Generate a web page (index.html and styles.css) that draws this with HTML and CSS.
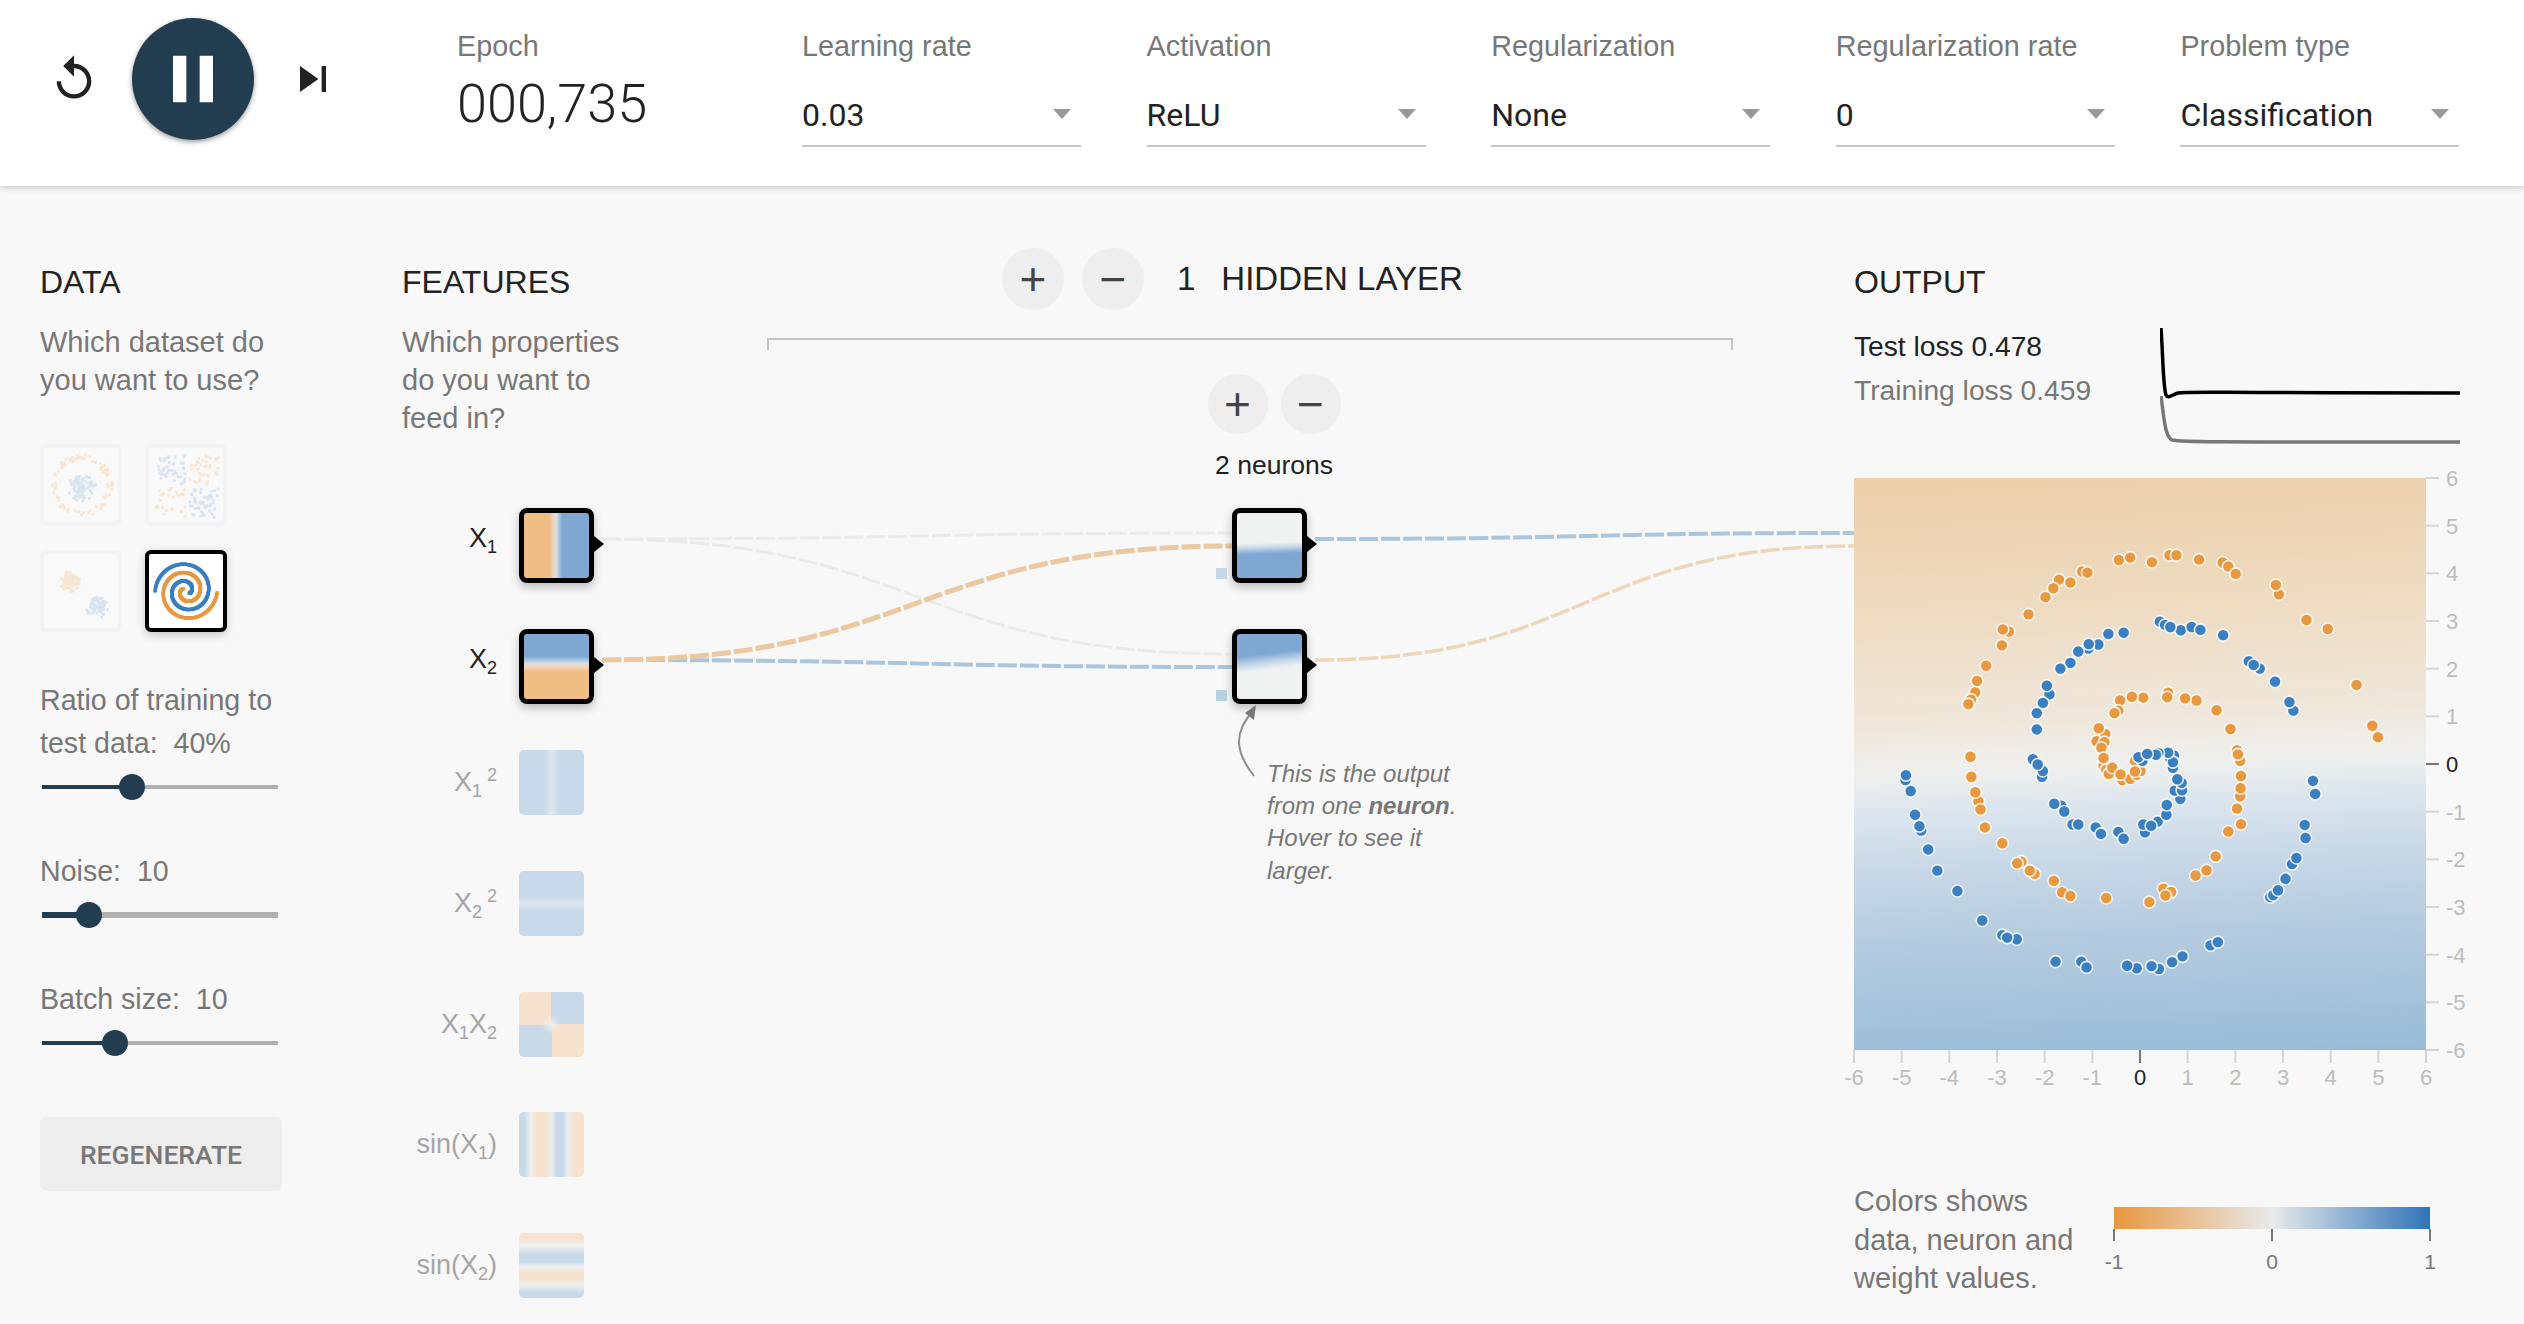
FILE: index.html
```html
<!DOCTYPE html>
<html lang="en">
<head>
    <meta charset="UTF-8">
    <title>Neural network playground</title>
    <link rel="stylesheet" href="styles.css">
</head>
<body>
    <header class="topbar">
        <div class="player">
            <button class="icon-btn reset-btn">
                <svg width="52" height="52" viewBox="0 0 24 24"><path d="M12 5V1L7 6l5 5V7c3.31 0 6 2.69 6 6s-2.69 6-6 6-6-2.69-6-6H4c0 4.42 3.58 8 8 8s8-3.58 8-8-3.58-8-8-8z"/></svg>
            </button>
            <button class="play-btn">
                <svg width="80" height="80" viewBox="0 0 24 24"><path d="M6 19h4V5H6v14zm8-14v14h4V5h-4z"/></svg>
            </button>
            <button class="icon-btn step-btn">
                <svg width="52" height="52" viewBox="0 0 24 24"><path d="M6 18l8.5-6L6 6v12zM16 6v12h2V6h-2z"/></svg>
            </button>
        </div>
        <div class="epoch">
            <div class="top-label">Epoch</div>
            <div class="epoch-value">000,735</div>
        </div>
        <div class="dropdowns">
            <div class="dropdown">
                <label class="top-label">Learning rate</label>
                <div class="select-wrap"><select><option>0.03</option></select></div>
            </div>
            <div class="dropdown">
                <label class="top-label">Activation</label>
                <div class="select-wrap"><select><option>ReLU</option></select></div>
            </div>
            <div class="dropdown">
                <label class="top-label">Regularization</label>
                <div class="select-wrap"><select><option>None</option></select></div>
            </div>
            <div class="dropdown">
                <label class="top-label">Regularization rate</label>
                <div class="select-wrap"><select><option>0</option></select></div>
            </div>
            <div class="dropdown">
                <label class="top-label">Problem type</label>
                <div class="select-wrap"><select><option>Classification</option></select></div>
            </div>
        </div>
    </header>

    <main class="board">
        <svg class="links" viewBox="0 186 2524 1138">
            <path class="link link-faint" d="M602 539 C917 539 917 533 1232 533"/>
            <path class="link link-faint" d="M602 539 C917 539 917 654 1232 654"/>
            <path class="link link-blue" d="M602 660 C917 660 917 667 1232 667"/>
            <path class="link link-orange" d="M602 660 C917 660 917 546 1232 546"/>
            <path class="link link-blue" d="M1315 539 C1585 539 1585 533 1854 533"/>
            <path class="link link-orange-thin" d="M1315 660 C1585 660 1585 546 1854 546"/>
        </svg>

        <section class="col-data">
            <h4 class="heading">DATA</h4>
            <p class="hint">Which dataset do<br>you want to use?</p>
            <div class="datasets">
                <svg class="dataset" id="dsCircle" viewBox="0 0 74 74"></svg>
                <svg class="dataset" id="dsXor" viewBox="0 0 74 74"></svg>
                <svg class="dataset" id="dsGauss" viewBox="0 0 74 74"></svg>
                <svg class="dataset selected" id="dsSpiral" viewBox="0 0 74 74"></svg>
            </div>
            <div class="control control-ratio">
                <div class="control-label">Ratio of training to<br>test data:&nbsp; 40%</div>
                <div class="slider"><div class="slider-fill" style="width: 38%"></div><div class="slider-thumb" style="left: 38%"></div></div>
            </div>
            <div class="control">
                <div class="control-label">Noise:&nbsp; 10</div>
                <div class="slider slider-thick"><div class="slider-fill" style="width: 20%"></div><div class="slider-thumb" style="left: 20%"></div></div>
            </div>
            <div class="control">
                <div class="control-label">Batch size:&nbsp; 10</div>
                <div class="slider"><div class="slider-fill" style="width: 31%"></div><div class="slider-thumb" style="left: 31%"></div></div>
            </div>
            <button class="regen-btn">REGENERATE</button>
        </section>

        <section class="col-features">
            <h4 class="heading">FEATURES</h4>
            <p class="hint">Which properties<br>do you want to<br>feed in?</p>
            <div class="features">
                <div class="feature active"><span class="feature-label">X<sub>1</sub></span><div class="node f-x1"></div></div>
                <div class="feature active"><span class="feature-label">X<sub>2</sub></span><div class="node f-x2"></div></div>
                <div class="feature"><span class="feature-label">X<sub>1</sub><sup>2</sup></span><div class="thumb f-x1sq"></div></div>
                <div class="feature"><span class="feature-label">X<sub>2</sub><sup>2</sup></span><div class="thumb f-x2sq"></div></div>
                <div class="feature"><span class="feature-label">X<sub>1</sub>X<sub>2</sub></span><div class="thumb f-x1x2"></div></div>
                <div class="feature"><span class="feature-label">sin(X<sub>1</sub>)</span><div class="thumb f-sinx1"></div></div>
                <div class="feature"><span class="feature-label">sin(X<sub>2</sub>)</span><div class="thumb f-sinx2"></div></div>
            </div>
        </section>

        <section class="col-network">
            <div class="layer-head">
                <button class="round-btn layer-btn">+</button>
                <button class="round-btn layer-btn">&minus;</button>
                <span class="layer-count">1</span>
                <span class="layer-title">HIDDEN LAYER</span>
            </div>
            <div class="bracket"></div>
            <div class="layer">
                <div class="neuron-btns">
                    <button class="round-btn neuron-btn">+</button>
                    <button class="round-btn neuron-btn">&minus;</button>
                </div>
                <div class="neuron-count">2 neurons</div>
                <div class="neurons">
                    <div class="node n-top"><span class="bias bias-a"></span></div>
                    <div class="node n-bottom">
                        <span class="bias bias-b"></span>
                        <div class="callout">
                            <svg class="callout-arrow" width="50" height="76" viewBox="0 0 50 76">
                                <path d="M27 72 C8 48 6 28 27 6" fill="none" stroke="#8c8c8c" stroke-width="2"/>
                                <path d="M29 1 L27 16 L18 9 Z" fill="#777"/>
                            </svg>
                            <p class="callout-text">This is the output<br>from one <b>neuron</b>.<br>Hover to see it<br>larger.</p>
                        </div>
                    </div>
                </div>
            </div>
        </section>

        <section class="col-output">
            <h4 class="heading">OUTPUT</h4>
            <div class="loss-row">
                <div class="loss-text">
                    <div class="loss-test">Test loss 0.478</div>
                    <div class="loss-train">Training loss 0.459</div>
                </div>
                <svg class="loss-chart" width="300" height="120" viewBox="0 0 300 120">
                    <path d="M1 70 C4 92 5 111 12 114 C22 116 30 116 300 116" fill="none" stroke="#777" stroke-width="3.5"/>
                    <path d="M1 2 C3 30 3 60 6 69 C8 73 12 69 18 67 C26 65 40 67 300 67" fill="none" stroke="#000" stroke-width="3.5"/>
                </svg>
            </div>
            <div class="plot">
                <svg class="plot-layer" id="plotLayer" width="572" height="572"></svg>
            </div>
            <div class="legend">
                <p class="legend-text">Colors shows<br>data, neuron and<br>weight values.</p>
                <svg class="legend-scale" width="320" height="70" viewBox="0 0 320 70">
                    <defs>
                        <linearGradient id="legendGrad">
                            <stop offset="0" stop-color="#e8973f"/>
                            <stop offset="0.5" stop-color="#e8eaeb"/>
                            <stop offset="1" stop-color="#2f73b8"/>
                        </linearGradient>
                    </defs>
                    <rect x="1" y="0" width="316" height="22" fill="url(#legendGrad)"/>
                    <path d="M1 22v12M159 22v12M317 22v12" stroke="#777" stroke-width="2"/>
                    <text x="1" y="62" text-anchor="middle">-1</text>
                    <text x="159" y="62" text-anchor="middle">0</text>
                    <text x="317" y="62" text-anchor="middle">1</text>
                </svg>
            </div>
        </section>
    </main>

    <script src="script.js"></script>
</body>
</html>
```

FILE: styles.css
```css
* {
    box-sizing: border-box;
}
body {
    margin: 0;
    height: 1324px;
    overflow: hidden;
    background-color: #f8f8f8;
    color: #777;
    font-family: "Liberation Sans", Arial, sans-serif;
    font-size: 28px;
}
button {
    font-family: inherit;
    border: none;
    padding: 0;
    cursor: pointer;
}

/* top bar */
.topbar {
    height: 186px;
    background-color: #fff;
    box-shadow: 0 2px 6px rgba(0, 0, 0, 0.18);
    display: flex;
    position: relative;
    z-index: 2;
}
.player {
    width: 457px;
    display: flex;
    align-items: center;
    padding-left: 48px;
}
.icon-btn {
    background: none;
    width: 52px;
    height: 52px;
    fill: #222;
}
.play-btn {
    width: 122px;
    height: 122px;
    margin: -28px 33px 0 32px;
    border-radius: 50%;
    background-color: #213d4f;
    box-shadow: 0 2px 5px rgba(0, 0, 0, 0.4);
    fill: #fff;
    display: flex;
    align-items: center;
    justify-content: center;
}
.reset-btn,
.step-btn {
    margin-top: -28px;
}
.top-label {
    display: block;
    padding-top: 29px;
    font-size: 28.8px;
    line-height: 34px;
    color: #777;
}
.epoch {
    width: 345px;
}
.epoch-value {
    font-family: Roboto, sans-serif;
    font-weight: 300;
    font-size: 54px;
    line-height: 60px;
    color: #222;
    margin-top: 11px;
}
.dropdowns {
    display: flex;
    gap: 65.6px;
}
.dropdown {
    width: 279px;
}
.select-wrap {
    position: relative;
    margin-top: 20px;
    border-bottom: 2px solid #c6c6c6;
}
.select-wrap::after {
    content: '';
    position: absolute;
    right: 10px;
    top: 26px;
    border-left: 9px solid transparent;
    border-right: 9px solid transparent;
    border-top: 10px solid #999;
}
.select-wrap select {
    display: block;
    width: 100%;
    height: 62px;
    padding: 2px 0 0;
    border: none;
    outline: none;
    appearance: none;
    background: none;
    font-family: Roboto, sans-serif;
    font-size: 32px;
    color: #222;
}

/* main board */
.board {
    position: relative;
    display: grid;
    grid-template-columns: 362px 365px 1087px 1fr;
    padding: 77px 0 0 40px;
}
.links {
    position: absolute;
    left: 0;
    top: 0;
    width: 2524px;
    height: 1138px;
}
.link {
    fill: none;
    stroke-dasharray: 19 3;
}
.link-faint {
    stroke: #e9ebe9;
    stroke-width: 3;
}
.link-blue {
    stroke: #a9c6de;
    stroke-width: 4;
}
.link-orange {
    stroke: #ebc89f;
    stroke-width: 5;
}
.link-orange-thin {
    stroke: #eed6ba;
    stroke-width: 3.5;
}
.heading {
    margin: 0;
    font-size: 32px;
    font-weight: 400;
    line-height: 38px;
    color: #222;
}
.hint {
    margin: 22px 0 0;
    font-size: 29px;
    line-height: 38px;
    color: #777;
}

/* data column */
.datasets {
    display: grid;
    grid-template-columns: 82px 82px;
    gap: 24px 23px;
    margin-top: 45px;
}
.dataset {
    width: 82px;
    height: 82px;
    border: 4px solid #f3f3f3;
    border-radius: 6px;
    background-color: #f9f9f9;
}
.dataset.selected {
    border-color: #000;
    background-color: #fff;
    box-shadow: 0 3px 10px rgba(0, 0, 0, 0.2);
}
.control {
    width: 238px;
    margin-top: 60.5px;
}
.control-ratio {
    margin-top: 47px;
}
.control-label {
    font-size: 28.6px;
    line-height: 43px;
}
.slider {
    position: relative;
    width: 236px;
    height: 4px;
    margin: 20px 0 20px 2px;
    background-color: #b0b0b0;
}
.slider-thick {
    height: 6px;
    margin: 19px 0 19px 2px;
}
.slider-fill {
    height: 100%;
    background-color: #213d4f;
}
.slider-thumb {
    position: absolute;
    top: 50%;
    width: 26px;
    height: 26px;
    margin: -13px 0 0 -13px;
    border-radius: 50%;
    background-color: #213d4f;
}
.regen-btn {
    display: block;
    width: 242px;
    height: 74px;
    margin-top: 72px;
    border-radius: 6px;
    background-color: #eee;
    color: #777;
    font-family: Roboto, sans-serif;
    font-weight: 500;
    font-size: 26.5px;
}

/* features column */
.features {
    margin-top: 71px;
    display: grid;
    grid-auto-rows: 120.67px;
}
.feature {
    display: flex;
    align-items: flex-start;
    gap: 22px;
}
.feature-label {
    width: 95px;
    padding-top: 16px;
    text-align: right;
    white-space: nowrap;
    font-size: 27px;
    line-height: 34px;
    color: #a5a5a5;
}
.feature.active .feature-label {
    color: #222;
    padding-top: 13px;
}
.feature-label sub,
.feature-label sup {
    font-size: 18px;
    line-height: 0;
}
.feature-label sup {
    margin-left: 5px;
}
.node {
    position: relative;
    z-index: 1;
    width: 75px;
    height: 75px;
    flex: none;
    border: 5px solid #000;
    border-radius: 8px;
    box-shadow: 0 4px 10px rgba(0, 0, 0, 0.25);
}
.node::after {
    content: '';
    position: absolute;
    right: -15px;
    top: 23px;
    border-top: 8px solid transparent;
    border-bottom: 8px solid transparent;
    border-left: 10px solid #000;
}
.thumb {
    width: 65px;
    height: 65px;
    margin-top: 1px;
    flex: none;
    border-radius: 5px;
}
.f-x1 {
    background: linear-gradient(to right, #f0bd85 39%, #f2d6b8 45%, #d8dfe5 50%, #a9c5e0 54%, #7ea8d2 59%);
}
.f-x2 {
    background: linear-gradient(to bottom, #7ea8d2 34%, #a9c5e0 40%, #d8dfe5 45%, #f2d6b8 50%, #f0bd85 58%);
}
.f-x1sq {
    background: linear-gradient(to right, #c8d9e9 38%, #dfe8ef 50%, #c8d9e9 62%);
}
.f-x2sq {
    background: linear-gradient(to bottom, #c8d9e9 38%, #dfe8ef 50%, #c8d9e9 62%);
}
.f-x1x2 {
    background:
        radial-gradient(circle at 50% 50%, #eef0ef 0, rgba(238, 240, 239, 0) 10px),
        conic-gradient(#c8d9e9 25%, #f6e2cd 25% 50%, #c8d9e9 50% 75%, #f6e2cd 75%);
}
.f-sinx1 {
    background: linear-gradient(to right, #c8d9e9 8%, #eef0ef 18%, #f6e2cd 28%, #f6e2cd 40%, #eef0ef 50%, #c8d9e9 58%, #c8d9e9 68%, #eef0ef 76%, #f6e2cd 86%);
}
.f-sinx2 {
    background: linear-gradient(to bottom, #f6e2cd 8%, #eef0ef 20%, #c8d9e9 34%, #c8d9e9 44%, #eef0ef 52%, #f6e2cd 62%, #f6e2cd 70%, #eef0ef 80%, #c8d9e9 92%);
}

/* network column */
.col-network {
    margin-top: -15px;
}
.layer-head {
    display: flex;
    align-items: center;
    gap: 18px;
    margin-left: 235px;
}
.round-btn {
    border-radius: 50%;
    background-color: #eee;
    color: #444;
    font-size: 46px;
    font-weight: 400;
    line-height: 1;
    display: flex;
    align-items: center;
    justify-content: center;
}
.layer-btn {
    width: 62px;
    height: 62px;
}
.layer-count {
    margin-left: 15px;
    font-size: 33px;
    color: #222;
}
.layer-title {
    margin-left: 8px;
    font-size: 33px;
    color: #222;
}
.bracket {
    width: 966px;
    height: 12px;
    margin-top: 28px;
    border: 2px solid #c4c4c4;
    border-bottom: none;
}
.layer {
    width: 200px;
    margin-left: 407px;
    margin-top: 24px;
}
.neuron-btns {
    display: flex;
    justify-content: center;
    gap: 13px;
}
.neuron-btn {
    width: 60px;
    height: 60px;
}
.neuron-count {
    margin-top: 16px;
    text-align: center;
    font-size: 26.5px;
    line-height: 30px;
    color: #222;
}
.neurons {
    margin-top: 28px;
    margin-left: 58px;
    display: grid;
    grid-auto-rows: 120.67px;
}
.bias {
    position: absolute;
    left: -21px;
    width: 11px;
    height: 11px;
}
.bias-a {
    top: 55px;
    background-color: #c6d7e6;
}
.bias-b {
    top: 56px;
    background-color: #b9cfe3;
}
.n-top {
    background:
        linear-gradient(178deg, #f0f2f2 46%, #c3d6e8 53%, #7ea8d2 62%);
}
.n-bottom {
    background:
        linear-gradient(173deg, #7ea8d2 32%, #c3d6e8 44%, #f0f2f2 54%);
}
.callout {
    position: absolute;
    left: -5px;
    top: 70px;
    width: 200px;
}
.callout-arrow {
    position: absolute;
    left: -5px;
    top: 0;
}
.callout-text {
    position: absolute;
    left: 35px;
    top: 54px;
    width: 240px;
    margin: 0;
    font-size: 24px;
    font-style: italic;
    line-height: 32.3px;
    color: #777;
}

/* output column */
.loss-row {
    display: flex;
    margin-top: 23px;
    height: 154px;
}
.loss-text {
    width: 306px;
    font-size: 28.2px;
    line-height: 44px;
}
.loss-test {
    color: #222;
}
.loss-chart {
    margin-top: 2px;
}
.plot {
    position: relative;
    width: 572px;
    height: 572px;
    background: linear-gradient(177.5deg, #edcfa9 0%, #eedabf 22%, #f0e7db 42%, #eff0ee 50%, #dde6ee 56%, #c8d8e7 66%, #b2cadf 80%, #98bcd8 100%);
}
.plot-layer {
    position: absolute;
    left: 0;
    top: 0;
    overflow: visible;
}
.plot-layer text {
    font-size: 22px;
    fill: #bdbdbd;
}
.plot-layer text.zero {
    fill: #222;
}
.legend {
    display: flex;
    margin-top: 132px;
}
.legend-text {
    width: 259px;
    margin: 0;
    font-size: 29px;
    line-height: 38.5px;
    color: #777;
}
.legend-scale {
    margin-top: 25px;
    overflow: visible;
}
.legend-scale text {
    font-size: 21px;
    fill: #777;
}
```

FILE: script.js
```js
const SVG_NS = 'http://www.w3.org/2000/svg';

function addShape(parent, name, attrs, text) {
    const el = document.createElementNS(SVG_NS, name);
    for (const key in attrs) el.setAttribute(key, attrs[key]);
    if (text !== undefined) el.textContent = text;
    parent.appendChild(el);
    return el;
}

// small repeatable random, the thumbnails should not change between loads
let seed = 7;
function rand() {
    seed = (seed * 16807) % 2147483647;
    return seed / 2147483647;
}

const ORANGE = '#e8983f';
const BLUE = '#3a7fc1';
const FADE_ORANGE = '#f7e6d4';
const FADE_BLUE = '#d8e4ef';

function pixel(svg, x, y, fill) {
    addShape(svg, 'rect', { x: x, y: y, width: 2.8, height: 2.8, fill: fill });
}

function drawCircleSet() {
    const svg = document.getElementById('dsCircle');
    for (let i = 0; i < 90; i++) {
        const a = rand() * Math.PI * 2;
        const r = 25 + rand() * 6;
        pixel(svg, 36 + Math.cos(a) * r, 36 + Math.sin(a) * r, FADE_ORANGE);
    }
    for (let i = 0; i < 90; i++) {
        const a = rand() * Math.PI * 2;
        const r = rand() * 15;
        pixel(svg, 36 + Math.cos(a) * r, 41 + Math.sin(a) * r * 0.9 - 2, FADE_BLUE);
    }
}

function drawXorSet() {
    const svg = document.getElementById('dsXor');
    for (let i = 0; i < 180; i++) {
        const x = 6 + rand() * 62;
        const y = 6 + rand() * 62;
        if (Math.abs(x - 37) < 2 || Math.abs(y - 37) < 2) continue;
        pixel(svg, x, y, (x - 37) * (y - 37) > 0 ? FADE_BLUE : FADE_ORANGE);
    }
}

function drawGaussSet() {
    const svg = document.getElementById('dsGauss');
    for (let i = 0; i < 90; i++) {
        const a = rand() * Math.PI * 2;
        const r = rand() * 10.5;
        pixel(svg, 25 + Math.cos(a) * r, 26 + Math.sin(a) * r, FADE_ORANGE);
        const b = rand() * Math.PI * 2;
        const s = rand() * 11;
        pixel(svg, 52 + Math.cos(b) * s, 52 + Math.sin(b) * s, FADE_BLUE);
    }
}

function drawSpiralSet() {
    const svg = document.getElementById('dsSpiral');
    const arm = (start, fill) => {
        for (let t = 0; t < 1.6; t += 0.004) {
            const r = 31 - 17 * t;
            const a = start + t * Math.PI * 2;
            addShape(svg, 'rect', {
                x: 35.5 + Math.cos(a) * r,
                y: 35.5 + Math.sin(a) * r,
                width: 3.2,
                height: 3.2,
                fill: fill
            });
        }
    };
    arm(Math.PI, BLUE);
    arm(0.05, ORANGE);
}

// dot positions read off the reference, in its crop's coordinates
const orangeDots = [
    [639,221],[665,215],[715,226],[755,209],[771,209],[823,220],[877,227],[890,237],[907,255],[1006,305],[999,282],[1069,368],[1118,390],[1184,527],[1220,627],[1233,655],
    [555,249],[567,252],[502,269],[489,290],[528,276],[471,312],[432,354],[387,396],[373,391],[371,430],[335,480],[310,545],[314,517],[300,563],[294,574],
    [299,703],[301,752],[317,812],[310,790],[322,832],[332,876],[372,915],[416,960],[406,964],[446,990],[435,982],[490,1007],[509,1035],[528,1044],[610,1049],[709,1059],[741,1026],[759,1034],[746,1043],[815,994],[840,981],[861,947],[890,886],[919,868],[910,830],[917,800],[918,780],[919,750],[917,713],[910,687],[912,697],[895,635],[863,589],[817,565],[791,560],[752,546],[750,557],[695,558],[669,556],[642,565],[638,590],[629,596],[608,647],[588,665],[606,667],[593,633],[599,681],[604,725],[604,706],[610,735],[616,745],[647,760],[665,757],[680,747],[689,738],[676,713]
];
const blueDots = [
    [733,372],[745,380],[781,393],[757,385],[806,385],[826,392],[878,405],[937,469],[962,487],[948,478],[997,519],[1039,590],[1030,569],[1084,762],[1089,794],[1065,870],[1067,902],[1036,966],[1046,951],[1021,1002],[986,1047],[993,1042],[1004,1030],[849,1165],[866,1157],[785,1192],[761,1206],[731,1223],[714,1216],[680,1221],[658,1215],[553,1205],[565,1219],[494,1205],[405,1150],[372,1140],[383,1146],[326,1104],[269,1032],[223,982],[202,930],[186,884],[182,873],[172,845],[162,787],[150,760],[151,748],
    [650,399],[615,402],[592,428],[569,438],[570,427],[546,445],[528,473],[505,487],[480,550],[474,529],[465,571],[451,596],[451,636],[442,709],[463,752],[465,738],[453,722],[507,823],[491,818],[514,837],[533,869],[546,869],[586,876],[598,892],[638,887],[650,904],[699,888],[728,862],[695,869],[713,872],[748,845],[749,821],[780,806],[767,786],[784,785],[783,767],[773,758],[763,730],[757,707],[765,700],[763,716],[752,693],[730,694],[724,698],[693,713],[684,704],[704,696]
];
const topDots = [[624,730],[643,746],[676,739]];

function drawDots(svg, dots, fill) {
    for (const dot of dots) {
        addShape(svg, 'circle', {
            cx: (dot[0] - 32) / 2.292,
            cy: (dot[1] - 20) / 2.45,
            r: 6,
            fill: fill,
            stroke: '#fff',
            'stroke-opacity': 0.85,
            'stroke-width': 1.6
        });
    }
}

function drawAxes(svg) {
    const unit = 572 / 12;
    for (let v = -6; v <= 6; v++) {
        const stroke = v === 0 ? '#777' : '#d5d5d5';
        const x = (v + 6) * unit;
        const y = (6 - v) * unit;
        addShape(svg, 'line', { x1: 572, x2: 585, y1: y, y2: y, stroke: stroke, 'stroke-width': 2 });
        addShape(svg, 'line', { x1: x, x2: x, y1: 572, y2: 585, stroke: stroke, 'stroke-width': 2 });
        const cls = v === 0 ? 'zero' : '';
        addShape(svg, 'text', { x: 592, y: y + 8, class: cls }, v);
        addShape(svg, 'text', { x: x, y: 607, 'text-anchor': 'middle', class: cls }, v);
    }
}

drawCircleSet();
drawXorSet();
drawGaussSet();
drawSpiralSet();

const plotLayer = document.getElementById('plotLayer');
drawAxes(plotLayer);
drawDots(plotLayer, orangeDots, ORANGE);
drawDots(plotLayer, blueDots, BLUE);
drawDots(plotLayer, topDots, ORANGE);
```
